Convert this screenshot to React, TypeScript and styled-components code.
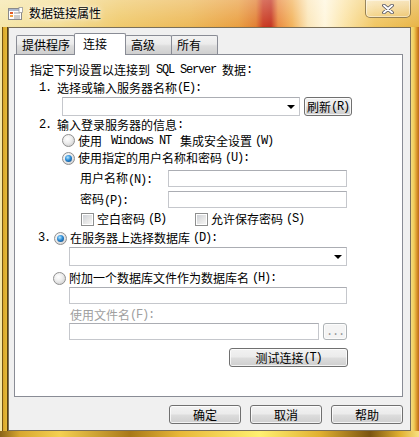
import styled, { createGlobalStyle } from "styled-components";

const GlobalStyle = createGlobalStyle`
  html, body { margin: 0; padding: 0; }
  body {
    width: 419px;
    height: 437px;
    overflow: hidden;
    font-family: "Noto Sans CJK SC", "Noto Sans", sans-serif;
    font-size: 12px;
    color: #000;
  }
`;

const Window = styled.div`
  width: 419px;
  height: 437px;
  box-sizing: border-box;
  display: flex;
  flex-direction: column;
  background:
    linear-gradient(90deg, #8a6418 0, #d8a830 20px, #f4d050 60px, #a87818 130px, #e8b838 180px, #fff070 260px, #e0b030 320px, #7a5410 370px, #e0b030 400px, #f8e080 419px) left bottom / 100% 6px no-repeat,
    linear-gradient(90deg, #f6e6a4 0, #f6e6a4 2px, #6a4a10 2px, #7a5a18 3px, #d8a428 3px, #e6bc3c 7px, #5a4010 7px) left 27px / 8px 404px no-repeat,
    linear-gradient(90deg, #f4dc80 0, #f0cc58 3px, #d89028 6px, #b86818 8px) right 27px / 8px 404px no-repeat,
    linear-gradient(180deg, rgba(255, 255, 255, 0.3) 0, rgba(255, 255, 255, 0.05) 26px, rgba(0, 0, 0, 0) 27px),
    linear-gradient(90deg, #f5e6a8 0, #f3dc92 60px, #efc867 120px, #ecb652 190px, #e99c3a 238px, #e07a2a 256px, #c9361b 263px, #c22c18 271px, #e9863a 278px, #f2b055 292px, #fbe6b8 308px, #fff6dc 325px, #fbe3a4 345px, #f0c45c 375px, #e7b13f 419px);
`;

const TitleBar = styled.div`
  height: 27px;
  display: flex;
  align-items: flex-start;
  padding-left: 8px;
  flex-shrink: 0;
`;

const TitleIcon = styled.svg`
  margin-top: 7px;
  flex-shrink: 0;
`;

const TitleText = styled.div`
  margin: 5px 0 0 6px;
  line-height: 16px;
  font-size: 12px;
  text-shadow: 0 0 6px rgba(255, 255, 255, 0.95), 0 0 3px rgba(255, 255, 255, 0.9);
`;

const CloseButton = styled.div`
  margin-left: auto;
  margin-right: 8px;
  width: 46px;
  height: 18px;
  box-sizing: border-box;
  border: 1px solid rgba(70, 50, 10, 0.55);
  border-top: none;
  border-radius: 0 0 5px 5px;
  background: linear-gradient(180deg, rgba(255, 255, 255, 0.5), rgba(255, 255, 255, 0.15));
  box-shadow: inset 0 0 0 1px rgba(255, 255, 255, 0.45);
  display: flex;
  align-items: center;
  justify-content: center;
`;

const Client = styled.div`
  flex: 1;
  margin: 0 8px 6px;
  box-sizing: border-box;
  border: 1px solid rgba(70, 55, 25, 0.7);
  background: #f0f0f0;
  display: flex;
  flex-direction: column;
  padding: 5px 7px 0 5px;
`;

const TabStrip = styled.div`
  height: 21px;
  display: flex;
  align-items: flex-end;
  padding-left: 2px;
`;

const Tab = styled.div<{ $w: number; $active?: boolean }>`
  width: ${(p) => p.$w}px;
  height: ${(p) => (p.$active ? 22 : 19)}px;
  margin-left: -1px;
  margin-bottom: ${(p) => (p.$active ? -1 : 0)}px;
  box-sizing: border-box;
  border: 1px solid #898c95;
  border-bottom: none;
  border-radius: 2px 2px 0 0;
  background: ${(p) =>
    p.$active
      ? "#ffffff"
      : "linear-gradient(180deg, #f3f3f3 0%, #ebebeb 45%, #dddddd 55%, #cfcfcf 100%)"};
  position: relative;
  z-index: ${(p) => (p.$active ? 2 : 1)};
  padding-left: ${(p) => (p.$active ? 8 : 5)}px;
  line-height: ${(p) => (p.$active ? 19 : 18)}px;
  white-space: nowrap;
  &:first-child {
    margin-left: 0;
  }
`;

const Panel = styled.div`
  height: 343px;
  box-sizing: border-box;
  border: 1px solid #898c95;
  background: #ffffff;
  display: flex;
  flex-direction: column;
`;

const Line = styled.div<{ $x: number; $mt?: number; $h: number; $gap?: number; $muted?: boolean }>`
  display: flex;
  align-items: center;
  margin-left: ${(p) => p.$x}px;
  margin-top: ${(p) => p.$mt ?? 0}px;
  height: ${(p) => p.$h}px;
  gap: ${(p) => p.$gap ?? 0}px;
  line-height: 14px;
  white-space: nowrap;
  color: ${(p) => (p.$muted ? "#a0a0a0" : "#000")};
`;

const Mono = styled.span`
  font-family: "Liberation Mono", "DejaVu Sans Mono", monospace;
  font-size: 12px;
  letter-spacing: -1.2px;
  white-space: pre;
`;

const Label = styled.span<{ $w?: number }>`
  display: inline-block;
  width: ${(p) => (p.$w ? `${p.$w}px` : "auto")};
`;

const Field = styled.div<{ $w: number; $h?: number }>`
  width: ${(p) => p.$w}px;
  height: ${(p) => p.$h ?? 17}px;
  box-sizing: border-box;
  border: 1px solid #c5c7cc;
  border-top-color: #abadb3;
  background: #ffffff;
  flex-shrink: 0;
`;

const Combo = styled.div<{ $w: number }>`
  width: ${(p) => p.$w}px;
  height: 19px;
  box-sizing: border-box;
  border: 1px solid #c5c7cc;
  border-top-color: #abadb3;
  background: #ffffff;
  display: flex;
  align-items: center;
  justify-content: flex-end;
  padding-right: 4px;
  flex-shrink: 0;
`;

const Arrow = styled.span`
  width: 0;
  height: 0;
  border-left: 4px solid transparent;
  border-right: 4px solid transparent;
  border-top: 4px solid #000;
`;

const Button = styled.div<{ $w: number; $h?: number; $disabled?: boolean }>`
  width: ${(p) => p.$w}px;
  height: ${(p) => p.$h ?? 19}px;
  box-sizing: border-box;
  border: 1px solid ${(p) => (p.$disabled ? "#adb2b5" : "#707070")};
  border-radius: 3px;
  background: ${(p) =>
    p.$disabled
      ? "#f4f4f4"
      : "linear-gradient(180deg, #f2f2f2 0%, #ebebeb 48%, #dddddd 52%, #cfcfcf 100%)"};
  box-shadow: inset 0 0 0 1px rgba(255, 255, 255, 0.75);
  color: ${(p) => (p.$disabled ? "#9a9a9a" : "#000")};
  display: flex;
  align-items: center;
  justify-content: center;
  line-height: 14px;
  white-space: nowrap;
  flex-shrink: 0;
`;

const Radio = styled.span<{ $on?: boolean }>`
  width: 13px;
  height: 13px;
  box-sizing: border-box;
  border-radius: 50%;
  border: 1px solid #8f8f8f;
  background: radial-gradient(circle at 40% 35%, #ffffff 0%, #ececec 45%, #c4c4c4 100%);
  display: flex;
  align-items: center;
  justify-content: center;
  flex-shrink: 0;
  &::after {
    content: "";
    display: ${(p) => (p.$on ? "block" : "none")};
    width: 7px;
    height: 7px;
    border-radius: 50%;
    background: radial-gradient(circle at 40% 35%, #b6e8ff 0%, #2b8bd6 45%, #0c3a6e 100%);
  }
`;

const Check = styled.span`
  width: 13px;
  height: 13px;
  box-sizing: border-box;
  border: 1px solid #8e8f8f;
  background: linear-gradient(135deg, #c9cdd3 0%, #e6e6e6 55%, #f8f8f8 100%);
  box-shadow: inset 0 0 0 1px #ffffff;
  flex-shrink: 0;
`;

const Item = styled.span<{ $w?: number }>`
  display: flex;
  align-items: center;
  gap: 3px;
  width: ${(p) => (p.$w ? `${p.$w}px` : "auto")};
`;

const Footer = styled.div`
  display: flex;
  justify-content: flex-end;
  gap: 9px;
  margin-top: 8px;
`;

const T = ({ children }: { children: string }) => (
  <>
    {children
      .split(/([\x20-\x7e]+)/)
      .filter((s) => s.length > 0)
      .map((s, i) => (/[\x20-\x7e]/.test(s) ? <Mono key={i}>{s}</Mono> : <span key={i}>{s}</span>))}
  </>
);

const AppIcon = () => (
  <TitleIcon width="15" height="14" viewBox="0 0 15 14">
    <rect x="0.5" y="1.5" width="13" height="11" fill="#fdfdfd" stroke="#8a8a8a" />
    <rect x="1" y="2" width="12" height="2" fill="#a9b6cc" />
    <rect x="2" y="5" width="3" height="2" fill="#e05a28" />
    <rect x="2" y="8" width="3" height="2" fill="#f0a040" />
    <path d="M6 6h6M6 9h6M6 11h6" stroke="#9a9a9a" strokeWidth="1" />
    <rect x="11" y="0.5" width="3.5" height="5" fill="#ffffff" stroke="#9a9a9a" strokeWidth="0.8" />
  </TitleIcon>
);

const CloseGlyph = () => (
  <svg width="12" height="10" viewBox="0 0 12 10">
    <path d="M2 1.5L10 8.5M10 1.5L2 8.5" stroke="#4a4a5a" strokeWidth="3.6" strokeLinecap="round" />
    <path d="M2 1.5L10 8.5M10 1.5L2 8.5" stroke="#ffffff" strokeWidth="2" strokeLinecap="round" />
  </svg>
);

export default function App() {
  return (
    <>
      <GlobalStyle />
      <Window>
        <TitleBar>
          <AppIcon />
          <TitleText>数据链接属性</TitleText>
          <CloseButton>
            <CloseGlyph />
          </CloseButton>
        </TitleBar>
        <Client>
          <TabStrip>
            <Tab $w={59}>提供程序</Tab>
            <Tab $w={52} $active>
              连接
            </Tab>
            <Tab $w={47}>高级</Tab>
            <Tab $w={47}>所有</Tab>
          </TabStrip>
          <Panel>
            <Line $x={15} $mt={6} $h={18}>
              <T>指定下列设置以连接到 SQL Server 数据:</T>
            </Line>
            <Line $x={24} $h={18}>
              <T>1. 选择或输入服务器名称(E):</T>
            </Line>
            <Line $x={47} $h={19} $gap={4}>
              <Combo $w={238}>
                <Arrow />
              </Combo>
              <Button $w={48}>
                <T>刷新(R)</T>
              </Button>
            </Line>
            <Line $x={24} $h={18}>
              <T>2. 输入登录服务器的信息:</T>
            </Line>
            <Line $x={47} $h={13} $gap={3}>
              <Radio />
              <T>使用 Windows NT 集成安全设置(W)</T>
            </Line>
            <Line $x={47} $mt={4} $h={14} $gap={3}>
              <Radio $on />
              <T>使用指定的用户名称和密码(U):</T>
            </Line>
            <Line $x={65} $mt={5} $h={17}>
              <Label $w={88}>
                <T>用户名称(N):</T>
              </Label>
              <Field $w={179} />
            </Line>
            <Line $x={65} $mt={4} $h={17}>
              <Label $w={88}>
                <T>密码(P):</T>
              </Label>
              <Field $w={179} />
            </Line>
            <Line $x={66} $mt={4} $h={14}>
              <Item $w={114}>
                <Check />
                <T>空白密码(B)</T>
              </Item>
              <Item>
                <Check />
                <T>允许保存密码(S)</T>
              </Item>
            </Line>
            <Line $x={23} $mt={5} $h={14} $gap={4}>
              <T>3.</T>
              <Item>
                <Radio $on />
                <T>在服务器上选择数据库(D):</T>
              </Item>
            </Line>
            <Line $x={54} $mt={2} $h={19}>
              <Combo $w={278}>
                <Arrow />
              </Combo>
            </Line>
            <Line $x={38} $mt={5} $h={14} $gap={3}>
              <Radio />
              <T>附加一个数据库文件作为数据库名(H):</T>
            </Line>
            <Line $x={54} $mt={2} $h={17}>
              <Field $w={278} />
            </Line>
            <Line $x={55} $mt={4} $h={14} $muted>
              <T>使用文件名(F):</T>
            </Line>
            <Line $x={54} $mt={1} $h={17} $gap={4}>
              <Field $w={250} />
              <Button $w={24} $h={17} $disabled>
                <Mono>...</Mono>
              </Button>
            </Line>
            <Line $x={214} $mt={8} $h={19}>
              <Button $w={119}>
                <T>测试连接(T)</T>
              </Button>
            </Line>
          </Panel>
          <Footer>
            <Button $w={72}>确定</Button>
            <Button $w={72}>取消</Button>
            <Button $w={72}>帮助</Button>
          </Footer>
        </Client>
      </Window>
    </>
  );
}
